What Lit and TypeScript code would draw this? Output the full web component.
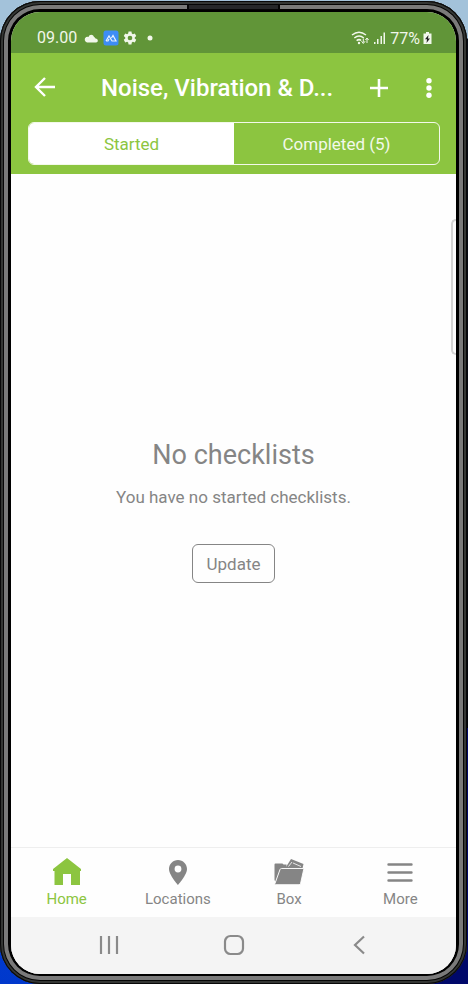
import { LitElement, html, css, svg } from "lit";
import { customElement, state } from "lit/decorators.js";

const icons = {
  home: svg`<path d="M16 1 2 12v2h1.500v14H12V17h8v11h9V14h1v-2z"/>`,
  pin: svg`<path fill-rule="evenodd" d="M16 3C11 3 7 7 7 12c0 6 9 16 9 16s9-10 9-16c0-5-4-9-9-9zm0 5.600a3.400 3.400 0 1 1 0 6.800 3.400 3.400 0 0 1 0-6.800z"/>`,
  box: svg`<path d="M1.500 23V7.500Q1.500 6.500 2.500 6.500H9q1 0 1.500 1h3v5H7L2.500 25z"/><path d="m13 10 5-8 12.500 5-1 4.500H13z"/><path d="m15.500 9.500 3.500-4.500M20 6l8 3.500" fill="none" stroke="#fff" stroke-width=".8"/><path d="M8.500 11.500h21.500q1 0 .7 1L27.500 26.700q-.3 1-1.500 1H2.500q-1 0-.6-1L7 12.500q.4-1 1.500-1z" stroke="#fff" stroke-width=".9"/>`,
  more: svg`<path d="M4.500 7.500h23M4.500 15.500h23M4.500 23.500h23" fill="none" stroke="currentColor" stroke-width="2.400" stroke-linecap="round"/>`,
};

@customElement("app-root")
export class AppRoot extends LitElement {
  @state() private tab: "started" | "completed" = "started";

  static styles = css`
    :host {
      display: block;
      box-sizing: border-box;
      min-height: 100vh;
      padding: 1px 1px 0 0;
      font-family: Roboto, "Liberation Sans", sans-serif;
      color: #858585;
      background:
        linear-gradient(90deg, transparent 50%, #00086a 51%) bottom / 100% 256px no-repeat,
        linear-gradient(#a3c2da 0, #a3c2da 38px, #080c16 39px, #02040a 74%, #0646d8 78%, #0038cc 100%);
      display: grid;
    }
    * { box-sizing: border-box; }
    button { font: inherit; color: inherit; background: none; border: 0; padding: 0; margin: 0; cursor: pointer; }
    svg { display: block; fill: currentColor; }
    .phone {
      position: relative;
      display: grid;
      padding: 11px 11px 10px;
      border-radius: 40px;
      background: #000;
      box-shadow: inset 0 0 0 1px #080808, inset 0 0 0 3px #343634, inset 0 0 0 4px #050505, inset 0 0 0 8px #7a7a7a;
    }
    .speaker {
      position: absolute;
      top: 3px;
      left: 40%;
      width: 20%;
      height: 6px;
      background: #262729;
      border: solid #050505;
      border-width: 1px 2px;
    }
    .edge {
      position: absolute;
      right: 11px;
      top: 218px;
      width: 5px;
      height: 136px;
      border: 2px solid #d4d4d4;
      border-right: 0;
      border-radius: 5px 0 0 5px;
    }
    .screen {
      display: flex;
      flex-direction: column;
      background: #fefefe;
      border-radius: 29px;
      overflow: hidden;
    }
    .status {
      display: flex;
      align-items: center;
      justify-content: space-between;
      height: 41px;
      padding: 11px 24px 0 26px;
      background: #619538;
      color: #f1f7ea;
      font-size: 16px;
    }
    .group { display: flex; align-items: center; gap: 4px; }
    .left { padding-bottom: 1px; }
    .clock { padding-right: 2px; }
    .right { gap: 3px; }
    .top { background: #8cc540; color: #fff; padding: 0 16px 9px 17px; }
    .bar { display: flex; align-items: center; height: 69px; }
    .icon { display: grid; place-items: center; width: 34px; height: 34px; }
    .title {
      flex: 1;
      margin: 0;
      padding: 1px 0 0 39px;
      font-size: 24px;
      line-height: 28px;
      font-weight: 500;
      white-space: nowrap;
    }
    .add { margin-right: 16px; }
    .menu { width: 28px; }
    .tabs {
      display: grid;
      grid-template-columns: 1fr 1fr;
      height: 43px;
      border: 1px solid #f3f9ea;
      border-radius: 6px;
      overflow: hidden;
    }
    .tab { font-size: 17px; color: #f3f9ea; }
    .tab.on { background: #fff; color: #8cc540; }
    .empty {
      flex: 1;
      display: flex;
      flex-direction: column;
      align-items: center;
      justify-content: center;
    }
    h2 { margin: 0; font-size: 27px; line-height: 34px; font-weight: 400; }
    p { margin: 14px 0 36px; font-size: 17px; line-height: 22px; }
    .update { height: 39px; padding: 0 14px; border: 1px solid #858585; border-radius: 6px; font-size: 17px; }
    .nav {
      display: grid;
      grid-template-columns: repeat(4, 1fr);
      height: 70px;
      border-top: 1px solid #eee;
    }
    .item {
      display: flex;
      flex-direction: column;
      align-items: center;
      padding-top: 9px;
      gap: 1px;
      color: #858585;
      font-size: 15px;
      line-height: 18px;
      text-decoration: none;
    }
    .item.on { color: #8cc540; }
    .system {
      display: grid;
      grid-template-columns: 1fr 1fr 1fr;
      height: 57px;
      padding: 0 35px 1px 36px;
      background: #f4f4f4;
      color: #8a8a8a;
    }
    .system button { display: grid; place-items: center; }
  `;

  private item(label: string, icon: unknown, on = false) {
    return html`<a class="item ${on ? "on" : ""}" href="#${label.toLowerCase()}">
      <svg width="32" height="32" viewBox="0 0 32 32" aria-hidden="true">${icon}</svg>
      <span>${label}</span>
    </a>`;
  }

  render() {
    const started = this.tab === "started";
    return html`
      <div class="phone">
        <div class="screen">
          <div class="status">
            <div class="group left">
              <span class="clock">09.00</span>
              <svg width="16" height="16" viewBox="0 0 16 16"><path d="M4 12.500a3 3 0 0 1-.8-5.500Q4.500 6.500 5.500 7C6.500 4 10 4 11 7q1 0 1.500 1.500c3 0 3 4 .5 4z"/></svg>
              <svg width="16" height="16" viewBox="0 0 16 16"><rect width="15" height="15" x=".5" y=".5" rx="2.500" fill="#3d8df5"/><path d="M3 11 6 6l3 5h4L10 5.500 8.500 8M3 11h2l1-2" fill="none" stroke="#e8f2ff" stroke-width="1.200"/></svg>
              <svg width="14" height="14" viewBox="0 0 24 24"><path fill-rule="evenodd" d="m9.500 1-.6 3.300-1.900 1.100-3.200-1.200-2.500 4.400L3.900 11v2l-2.600 2.200 2.500 4.400 3.200-1.200 1.900 1.100.6 3.500h5l.6-3.500 1.900-1.100 3.200 1.200 2.500-4.400-2.600-2.200v-2l2.600-2.400-2.500-4.400L17 5.400l-1.900-1.100L14.500 1zM12 8a4 4 0 1 1 0 8 4 4 0 0 1 0-8z"/></svg>
              <svg width="20" height="16" viewBox="0 0 20 16"><circle cx="9" cy="8" r="2.500"/></svg>
            </div>
            <div class="group right">
              <svg width="18" height="16" viewBox="0 0 18 16"><path d="M1 5q7-5.500 14 0M3.300 8q4.800-4 9.500 0M5.600 10.700q2.500-2 4.500-.2" fill="none" stroke="currentColor" stroke-width="1.500"/><path d="M12.300 8.500v4M10.500 11.200l1.800 2.300 1.800-2.300M16 13V8.500M14.400 10 16 8l1.600 2" fill="none" stroke="currentColor" stroke-width="1"/><circle cx="8" cy="13" r="1.200"/></svg>
              <svg width="15" height="14" viewBox="0 0 15 14"><path d="M2 11h1.500v2H2zM5 8h1.500v5H5zM8.500 5H10v8H8.500zM11.500 1.500H13V13h-1.500z"/></svg>
              <span>77%</span>
              <svg width="9" height="14" viewBox="0 0 9 14"><path d="M3 1h3v1.500h2.500V13H.5V2.500H3z"/><path d="M5.500 4 2 8.300h2L3.500 12 7 7.500H5z" fill="#222"/></svg>
            </div>
          </div>
          <header class="top">
            <div class="bar">
              <button class="icon" aria-label="Back">
                <svg width="22" height="22" viewBox="0 0 22 22"><path d="M21 10H2.500M11 1 2 10l9 9" fill="none" stroke="currentColor" stroke-width="2.400"/></svg>
              </button>
              <h1 class="title">Noise, Vibration &amp; D...</h1>
              <button class="icon add" aria-label="Add">
                <svg width="18" height="18" viewBox="0 0 18 18"><path d="M9 0v18M0 9h18" stroke="currentColor" stroke-width="2.600"/></svg>
              </button>
              <button class="icon menu" aria-label="Menu">
                <svg width="20" height="20" viewBox="0 0 20 20"><circle cx="13" cy="2.800" r="2.700"/><circle cx="13" cy="10" r="2.700"/><circle cx="13" cy="17.200" r="2.700"/></svg>
              </button>
            </div>
            <div class="tabs" role="tablist">
              <button class="tab ${started ? "on" : ""}" role="tab" aria-selected=${started} @click=${() => (this.tab = "started")}>Started</button>
              <button class="tab ${started ? "" : "on"}" role="tab" aria-selected=${!started} @click=${() => (this.tab = "completed")}>Completed (5)</button>
            </div>
          </header>
          <main class="empty">
            <h2>No checklists</h2>
            <p>You have no started checklists.</p>
            <button class="update">Update</button>
          </main>
          <nav class="nav">
            ${this.item("Home", icons.home, true)} ${this.item("Locations", icons.pin)}
            ${this.item("Box", icons.box)} ${this.item("More", icons.more)}
          </nav>
          <div class="system">
            <button aria-label="Recent apps"><svg width="20" height="20" viewBox="0 0 20 20"><path d="M2 1v18M10 1v18M18 1v18" stroke="currentColor" stroke-width="2.200"/></svg></button>
            <button aria-label="Home screen"><svg width="22" height="22" viewBox="0 0 22 22"><rect x="2" y="2" width="18" height="18" rx="5.500" fill="none" stroke="currentColor" stroke-width="2.200"/></svg></button>
            <button aria-label="Go back"><svg width="20" height="20" viewBox="0 0 20 20"><path d="M15 1.500 6 10l9 8.500" fill="none" stroke="currentColor" stroke-width="2.200"/></svg></button>
          </div>
        </div>
        <div class="speaker"></div>
        <div class="edge"></div>
      </div>
    `;
  }
}
